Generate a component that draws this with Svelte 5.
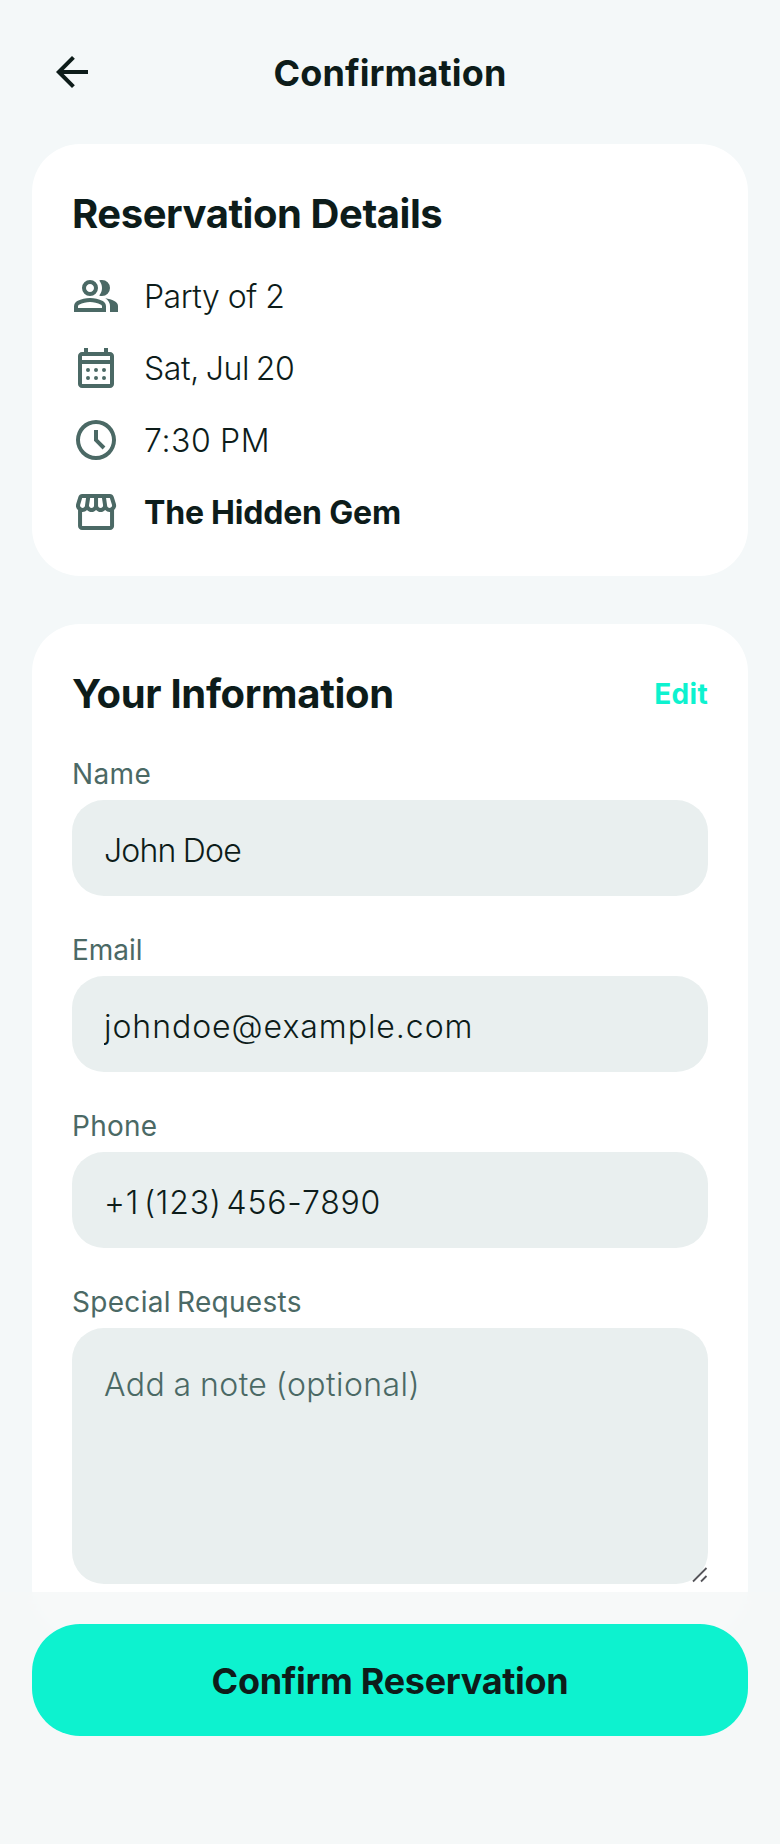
<script>
  const details = [
    { icon: 'group', text: 'Party of 2', tracking: -0.5, wordGap: 0 },
    { icon: 'calendar', text: 'Sat, Jul 20', tracking: -0.35, wordGap: -2 },
    { icon: 'clock', text: '7:30 PM', tracking: 0.6, wordGap: -1 },
    { icon: 'store', text: 'The Hidden Gem', tracking: -0.2, wordGap: 0, strong: true }
  ];

  const icons = {
    back: 'm313-440 224 224-57 56-320-320 320-320 57 56-224 224h487v80H313Z',
    group:
      'M40-160v-112q0-34 17.5-62.5T104-378q62-31 126-46.5T360-440q66 0 130 15.5T616-378q29 15 46.5 43.5T680-272v112H40Zm720 0v-120q0-44-24.5-84.5T666-434q51 6 96 20.5t84 35.5q36 20 55 44.5t19 53.5v120H760ZM360-480q-66 0-113-47t-47-113q0-66 47-113t113-47q66 0 113 47t47 113q0 66-47 113t-113 47Zm400-160q0 66-47 113t-113 47q-11 0-28-2.5t-28-5.5q27-32 41.5-71t14.5-81q0-42-14.5-81T544-792q14-5 28-6.5t28-1.5q66 0 113 47t47 113ZM120-240h480v-32q0-11-5.5-20T580-306q-54-27-109-40.5T360-360q-56 0-111 13.5T140-306q-9 5-14.5 14t-5.5 20v32Zm240-320q33 0 56.5-23.5T440-640q0-33-23.5-56.5T360-720q-33 0-56.5 23.5T280-640q0 33 23.5 56.5T360-560Z',
    calendar:
      'M200-80q-33 0-56.5-23.5T120-160v-560q0-33 23.5-56.5T200-800h40v-80h80v80h320v-80h80v80h40q33 0 56.5 23.5T840-720v560q0 33-23.5 56.5T760-80H200Zm0-80h560v-400H200v400Zm0-480h560v-80H200v80ZM280-440a40 40 0 1 1 80 0a40 40 0 1 1-80 0ZM440-440a40 40 0 1 1 80 0a40 40 0 1 1-80 0ZM600-440a40 40 0 1 1 80 0a40 40 0 1 1-80 0ZM280-280a40 40 0 1 1 80 0a40 40 0 1 1-80 0ZM440-280a40 40 0 1 1 80 0a40 40 0 1 1-80 0ZM600-280a40 40 0 1 1 80 0a40 40 0 1 1-80 0Z',
    clock:
      'm612-292 56-56-148-148v-184h-80v216l172 172ZM480-80q-83 0-156-31.5T197-197q-54-54-85.5-127T80-480q0-83 31.5-156T197-763q54-54 127-85.5T480-880q83 0 156 31.5T763-763q54 54 85.5 127T880-480q0 83-31.5 156T763-197q-54 54-127 85.5T480-80Zm0-80q133 0 226.5-93.5T800-480q0-133-93.5-226.5T480-800q-133 0-226.5 93.5T160-480q0 133 93.5 226.5T480-160Z',
    store:
      'M841-518v318q0 33-23.5 56.5T761-120H201q-33 0-56.5-23.5T121-200v-318q-23-21-35.5-54t-.5-72l42-136q8-26 28.5-43t47.5-17h556q27 0 47 16.5t29 43.5l42 136q12 39-.5 71T841-518Zm-272-42q27 0 41-18.5t11-41.5l-22-140h-78v148q0 21 14 36.5t34 15.5Zm-180 0q23 0 37.5-15.5T441-612v-148h-78l-22 140q-4 24 10.5 42t37.5 18Zm-178 0q18 0 31.5-13t16.5-33l22-154h-78l-40 134q-6 20 6.5 43t41.5 23Zm540 0q29 0 42-23t6-43l-42-134h-76l22 154q3 20 16.5 33t31.5 13ZM201-200h560v-282q-5 2-6.5 2H751q-27 0-47.5-9T663-518q-18 18-41 28t-49 10q-27 0-50.5-10T481-518q-17 18-39.5 28T393-480q-29 0-52.5-10T299-518q-21 21-41.5 29.5T211-480h-4.5q-2.5 0-5.5-2v282Z'
  };

  const fields = [
    { label: 'Name', value: 'John Doe', labelTracking: 0.4, tracking: -0.8, wordGap: -1 },
    { label: 'Email', value: 'johndoe@example.com', labelTracking: 0, tracking: 0.95, wordGap: 0 },
    { label: 'Phone', value: '+1 (123) 456-7890', labelTracking: 0.25, tracking: 0.8, wordGap: -5 }
  ];
</script>

{#snippet icon(name)}
  <svg class="icon" viewBox="0 -960 960 960" aria-hidden="true"><path d={icons[name]} /></svg>
{/snippet}

<div class="page">
  <header>
    <button class="back" aria-label="Back">{@render icon('back')}</button>
    <h1>Confirmation</h1>
  </header>

  <main>
    <section class="card">
      <h2 class="h-details">Reservation Details</h2>
      <ul>
        {#each details as d}
          <li>
            {@render icon(d.icon)}
            <span class:strong={d.strong} style="letter-spacing: {d.tracking}px; word-spacing: {d.wordGap}px">{d.text}</span>
          </li>
        {/each}
      </ul>
    </section>

    <section class="card">
      <div class="card-head">
        <h2 class="h-info">Your Information</h2>
        <button class="edit">Edit</button>
      </div>
      <div class="fields">
        {#each fields as f}
          <label>
            <span style="letter-spacing: {f.labelTracking}px">{f.label}</span>
            <input value={f.value} style="letter-spacing: {f.tracking}px; word-spacing: {f.wordGap}px" />
          </label>
        {/each}
        <label>
          <span class="l-requests">Special Requests</span>
          <div class="note">
            <textarea placeholder="Add a note (optional)"></textarea>
            <svg class="grip" viewBox="0 0 16 16" aria-hidden="true"><path d="M1 14.5 14.5 1M9 14.5 14.5 9" /></svg>
          </div>
        </label>
      </div>
    </section>
  </main>

  <footer>
    <button class="confirm">Confirm Reservation</button>
  </footer>
</div>

<style>
  :global(body) {
    background: #f4f8f9;
  }
  .page {
    box-sizing: border-box;
    height: 1844px;
    overflow: hidden;
    background: #f4f8f9;
    color: #0d1c1a;
    font-family: Inter, 'Liberation Sans', sans-serif;
    font-size: 32px;
    line-height: 48px;
  }
  button,
  input,
  textarea {
    font: inherit;
    color: inherit;
    border: 0;
    padding: 0;
    margin: 0;
    background: none;
    outline: 0;
  }
  header {
    display: grid;
    grid-template-columns: 48px 1fr 48px;
    align-items: center;
    height: 144px;
    padding: 0 48px;
    box-sizing: border-box;
  }
  h1,
  h2,
  ul {
    margin: 0;
    padding: 0;
  }
  h1 {
    height: 56px;
    font-size: 36px;
    line-height: 58px;
    font-weight: 650;
    letter-spacing: 0.1px;
    text-align: center;
  }
  .icon {
    display: block;
    flex: none;
    width: 48px;
    height: 48px;
    fill: currentColor;
  }
  main {
    display: flex;
    flex-direction: column;
    gap: 48px;
    padding: 0 32px;
  }
  .card {
    background: #fff;
    border-radius: 48px;
    padding: 40px;
  }
  h2 {
    height: 56px;
    font-size: 40px;
    line-height: 60px;
    font-weight: 650;
  }
  .h-details {
    letter-spacing: -0.45px;
  }
  .h-info {
    letter-spacing: -0.33px;
  }
  ul {
    list-style: none;
    display: flex;
    flex-direction: column;
    gap: 24px;
    margin-top: 32px;
  }
  li {
    display: flex;
    gap: 24px;
    height: 48px;
    line-height: 50px;
    font-weight: 330;
  }
  li .icon {
    color: #4b6965;
  }
  .strong {
    font-weight: 650;
  }
  .card-head {
    display: flex;
    justify-content: space-between;
    align-items: center;
  }
  .edit {
    height: 40px;
    font-size: 28px;
    line-height: 44px;
    font-weight: 650;
    letter-spacing: 0.3px;
    color: #0df2cf;
  }
  .fields {
    display: flex;
    flex-direction: column;
    gap: 32px;
    margin-top: 32px;
  }
  label {
    display: flex;
    flex-direction: column;
    gap: 8px;
  }
  label span {
    height: 40px;
    font-size: 28px;
    line-height: 44px;
    font-weight: 420;
    color: #4b6965;
  }
  .l-requests {
    letter-spacing: 0.3px;
    word-spacing: -2px;
  }
  input,
  textarea {
    box-sizing: border-box;
    width: 100%;
    padding: 4px 32px 0;
    border-radius: 32px;
    background: #e9efef;
    font-weight: 330;
  }
  input {
    height: 96px;
  }
  .note {
    position: relative;
    height: 268px;
  }
  textarea {
    display: block;
    height: 256px;
    padding-top: 33px;
    resize: none;
    overflow: hidden;
    letter-spacing: 0.42px;
    word-spacing: -1px;
  }
  textarea::placeholder {
    color: #4b6965;
    opacity: 1;
  }
  .grip {
    position: absolute;
    right: 0;
    top: 239px;
    width: 16px;
    height: 16px;
    fill: none;
    stroke: #55555a;
    stroke-width: 1.8;
  }
  footer {
    position: fixed;
    left: 0;
    right: 0;
    bottom: 0;
    box-sizing: border-box;
    height: 252px;
    padding: 32px;
    background: rgba(245, 248, 248, 0.8);
    backdrop-filter: blur(8px);
  }
  .confirm {
    width: 100%;
    height: 112px;
    padding-top: 2px;
    border-radius: 48px;
    background: #0df2cf;
    font-size: 36px;
    font-weight: 650;
    letter-spacing: -0.32px;
  }
</style>
